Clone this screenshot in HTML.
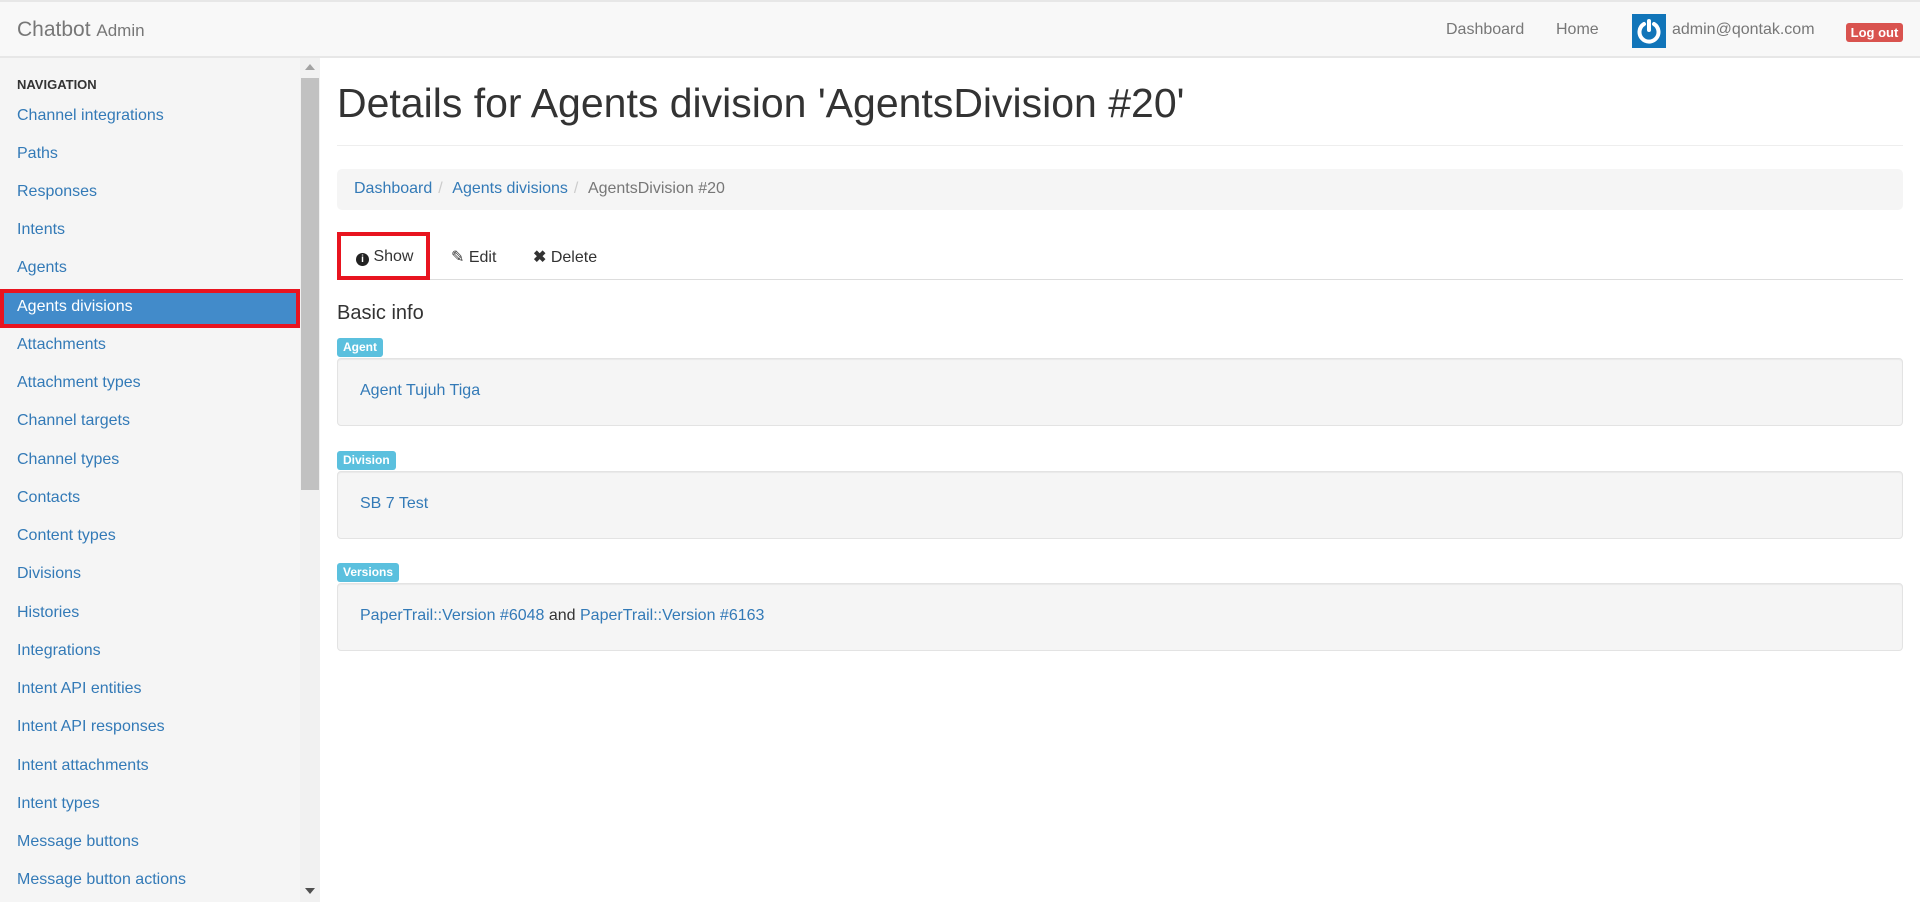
<!DOCTYPE html>
<html><head><meta charset="utf-8"><style>
*{box-sizing:border-box;margin:0;padding:0}
body{width:1920px;height:902px;overflow:hidden;font-family:"Liberation Sans",Arial,sans-serif;font-size:16px;color:#333;background:#fff;position:relative}
a{color:#337ab7;text-decoration:none}
.hdr{position:absolute;left:0;top:0;width:1920px;height:58px;background:#f8f8f8;border-top:2px solid #e7e7e7;border-bottom:2px solid #e7e7e7}
.brand{position:absolute;left:17px;top:16px;font-size:21px;color:#777}
.brand small{font-size:17px}
.nv{position:absolute;top:19px;font-size:16px;color:#777}
.av{position:absolute;left:1632px;top:12px;width:34px;height:34px;background:#1175b9}
.lo{position:absolute;left:1846px;top:21px;width:57px;height:19px;background:#d9534f;border-radius:3px;color:#fff;font-weight:bold;font-size:13px;text-align:center;line-height:19px}
.side{position:absolute;left:0;top:58px;width:300px;height:844px;background:#f5f5f5}
.navh{position:absolute;left:17px;top:19px;font-size:13px;font-weight:bold;color:#333}
.it{position:absolute;left:17px;font-size:16px;color:#337ab7}
.act{position:absolute;left:0;top:231px;width:300px;height:39px;background:#428bca;border:4px solid #e8141f}
.sb{position:absolute;left:300px;top:58px;width:20px;height:844px;background:#f1f1f1}
.th{position:absolute;left:301px;top:78px;width:18px;height:412px;background:#c1c1c1}
h1{position:absolute;left:337px;top:80px;font-size:41px;font-weight:normal;color:#333;white-space:nowrap}
.hr{position:absolute;left:337px;top:145px;width:1566px;height:1px;background:#eee}
.bc{position:absolute;left:337px;top:169px;width:1566px;height:41px;background:#f5f5f5;border-radius:5px;padding:11px 17px;font-size:16px;color:#777}
.bc .s{color:#ccc;padding:0 6px}
.tabs{position:absolute;left:337px;top:279px;width:1566px;height:1px;background:#ddd}
.show{position:absolute;left:337px;top:232px;width:93px;height:48px;border:4px solid #e8141f;background:#fff;font-size:16px;padding-top:12px;padding-left:15px;color:#333}
.tb{position:absolute;top:247px;font-size:16px;color:#333}
.bi{position:absolute;left:337px;top:302px;font-size:20px;color:#333}
.lab{position:absolute;left:337px;height:19px;background:#5bc0de;color:#fff;font-weight:bold;font-size:12px;line-height:19px;padding:0 6px;border-radius:3px}
.pan{position:absolute;left:337px;width:1566px;height:68px;background:#f5f5f5;border:1px solid #e3e3e3;border-radius:4px;box-shadow:inset 0 1px 1px rgba(0,0,0,.05);padding:23px 22px;font-size:16px}
</style></head><body>
<div class="hdr"><div class="brand">Chatbot <small>Admin</small></div>
<span class="nv" style="left:1446px">Dashboard</span><span class="nv" style="left:1556px">Home</span>
<div class="av"><svg width="34" height="34" viewBox="0 0 34 34"><path d="M12 10 A9.5 9.5 0 1 0 22 10" fill="none" stroke="#fff" stroke-width="4" stroke-linecap="round"/><line x1="17" y1="7" x2="17" y2="16" stroke="#fff" stroke-width="4" stroke-linecap="round"/></svg></div>
<span class="nv" style="left:1672px">admin@qontak.com</span>
<div class="lo">Log out</div></div>
<div class="side">
<div class="navh">NAVIGATION</div>
<div class="act"></div>
<span class="it" style="top:49px">Channel integrations</span>
<span class="it" style="top:87px">Paths</span>
<span class="it" style="top:125px">Responses</span>
<span class="it" style="top:163px">Intents</span>
<span class="it" style="top:201px">Agents</span>
<span class="it" style="top:240px;color:#fff">Agents divisions</span>
<span class="it" style="top:278px">Attachments</span>
<span class="it" style="top:316px">Attachment types</span>
<span class="it" style="top:354px">Channel targets</span>
<span class="it" style="top:393px">Channel types</span>
<span class="it" style="top:431px">Contacts</span>
<span class="it" style="top:469px">Content types</span>
<span class="it" style="top:507px">Divisions</span>
<span class="it" style="top:546px">Histories</span>
<span class="it" style="top:584px">Integrations</span>
<span class="it" style="top:622px">Intent API entities</span>
<span class="it" style="top:660px">Intent API responses</span>
<span class="it" style="top:699px">Intent attachments</span>
<span class="it" style="top:737px">Intent types</span>
<span class="it" style="top:775px">Message buttons</span>
<span class="it" style="top:813px">Message button actions</span>
</div>
<div class="sb"></div><div class="th"></div>
<div style="position:absolute;left:305px;top:64px;width:0;height:0;border-left:5px solid transparent;border-right:5px solid transparent;border-bottom:6px solid #a3a3a3"></div>
<div style="position:absolute;left:305px;top:888px;width:0;height:0;border-left:5px solid transparent;border-right:5px solid transparent;border-top:6px solid #505050"></div>
<h1>Details for Agents division 'AgentsDivision #20'</h1>
<div class="hr"></div>
<div class="bc"><a>Dashboard</a><span class="s">/</span> <a>Agents divisions</a><span class="s">/</span> AgentsDivision #20</div>
<div class="tabs"></div>
<div class="show"><span style="display:inline-block;width:13px;height:13px;border-radius:50%;background:#222;color:#fff;font-size:10px;font-weight:bold;text-align:center;line-height:13px;vertical-align:-1px">i</span> Show</div>
<span class="tb" style="left:451px">✎ Edit</span>
<span class="tb" style="left:533px"><b>✖</b> Delete</span>
<div class="bi">Basic info</div>
<div class="lab" style="top:338px">Agent</div>
<div class="pan" style="top:358px"><a>Agent Tujuh Tiga</a></div>
<div class="lab" style="top:451px">Division</div>
<div class="pan" style="top:471px"><a>SB 7 Test</a></div>
<div class="lab" style="top:563px">Versions</div>
<div class="pan" style="top:583px"><a>PaperTrail::Version #6048</a> and <a>PaperTrail::Version #6163</a></div>
</body></html>
